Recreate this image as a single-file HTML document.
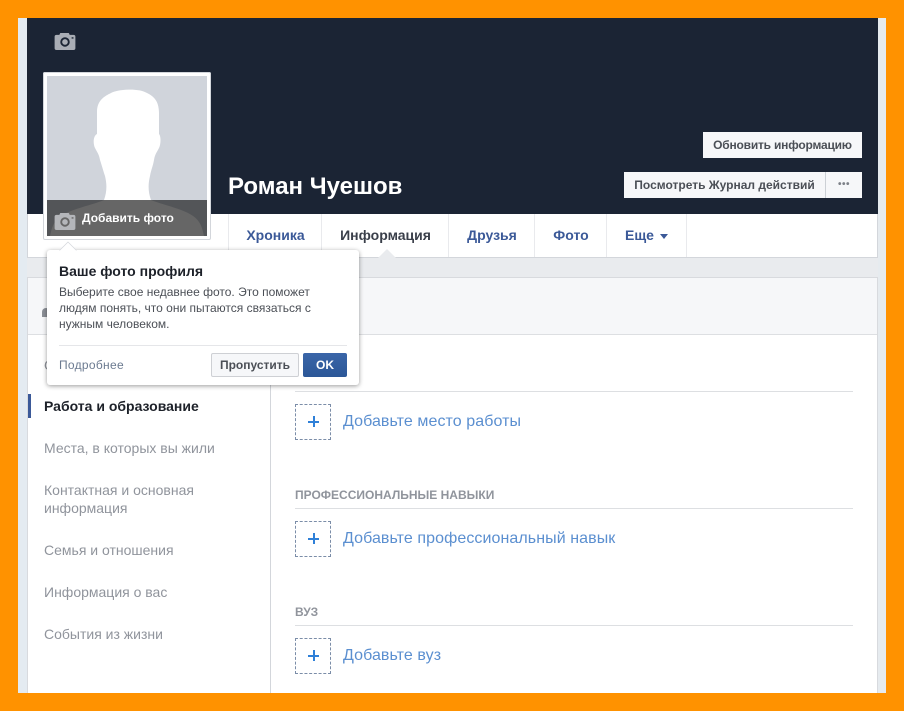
<!DOCTYPE html>
<html><head><meta charset="utf-8">
<style>
html,body{margin:0;padding:0;width:904px;height:711px;overflow:hidden;background:#ff9200;font-family:"Liberation Sans",sans-serif}
.a{position:absolute;white-space:nowrap}
#frame{position:absolute;left:18px;top:18px;width:868px;height:675px;background:#e9ebee;overflow:hidden}
.tab{position:absolute;top:214px;height:43px;line-height:43px;font-size:14px;font-weight:bold;color:#3b5998;text-align:center;border-right:1px solid #e9eaed;box-sizing:border-box;white-space:nowrap;padding-left:1px}
.side{position:absolute;left:44px;font-size:14px;line-height:18px;color:#90949c;white-space:nowrap}
.hd{position:absolute;left:295px;width:558px;font-size:12px;font-weight:bold;color:#90949c;height:20px;line-height:14px;border-bottom:1px solid #dddfe2;box-sizing:content-box}
.dash{position:absolute;left:295px;width:34px;height:34px;border:1px dashed #7b8da8}
.plus{position:absolute;left:12px;top:11px;width:11px;height:11px;background:linear-gradient(#2f80d8,#2f80d8) center/11px 2px no-repeat,linear-gradient(#2f80d8,#2f80d8) center/2px 11px no-repeat}
.add{position:absolute;left:343px;font-size:16px;color:#5b8fd0;line-height:20px;white-space:nowrap;letter-spacing:.08px}
.btn{position:absolute;background:#f6f7f9;font-size:12px;font-weight:bold;color:#4b4f56;text-align:center;box-sizing:border-box;white-space:nowrap}
</style></head>
<body>
<div id="frame"></div>
<!-- side strip tint -->
<div class="a" style="left:18px;top:18px;width:9px;height:675px;background:#e4ebf1"></div>
<div class="a" style="left:878px;top:18px;width:8px;height:675px;background:#e6ebef"></div>
<!-- cover -->
<div class="a" style="left:27px;top:18px;width:851px;height:196px;background:#1b2434"></div>
<!-- nav -->
<div class="a" style="left:27px;top:214px;width:851px;height:44px;background:#fff;border-bottom:1px solid #d3d6db;border-right:1px solid #d3d6db;border-left:1px solid #d3d6db;box-sizing:border-box"></div>
<div class="tab" style="left:228px;width:94px;border-left:1px solid #e9eaed">Хроника</div>
<div class="tab" style="left:322px;width:127px;color:#3a3f4a">Информация</div>
<div class="tab" style="left:449px;width:86px">Друзья</div>
<div class="tab" style="left:535px;width:72px">Фото</div>
<div class="tab" style="left:607px;width:80px;text-align:left;padding-left:18px">Еще<span style="position:absolute;left:53px;top:20px;width:0;height:0;border:4.5px solid transparent;border-top:5px solid #3b5998;border-bottom:0"></span></div>
<!-- nav arrow -->
<svg class="a" style="left:378px;top:249px" width="18" height="10"><path d="M0 9L9 0L18 9Z" fill="#e9ebee"/></svg>
<!-- card -->
<div class="a" style="left:27px;top:277px;width:851px;height:416px;background:#fff;border:1px solid #d8dade;border-bottom:0;box-sizing:border-box"></div>
<div class="a" style="left:28px;top:278px;width:849px;height:56px;background:#f6f7f9;border-bottom:1px solid #dddfe2;box-sizing:content-box"></div>
<div class="a" style="left:270px;top:335px;width:1px;height:358px;background:#d3d6db"></div>
<div class="a" style="left:42px;top:308px;width:8px;height:9px;background:#8b8f96;border-radius:4px 4px 0 0"></div>
<!-- sidebar -->
<div class="side" style="top:356px">Обзор</div>
<div class="a" style="left:28px;top:394px;width:3px;height:24px;background:#3b5998"></div>
<div class="side" style="top:397px;color:#1d2129;font-weight:bold">Работа и образование</div>
<div class="side" style="top:439px">Места, в которых вы жили</div>
<div class="side" style="top:481px">Контактная и основная<br>информация</div>
<div class="side" style="top:541px">Семья и отношения</div>
<div class="side" style="top:583px">Информация о вас</div>
<div class="side" style="top:625px">События из жизни</div>
<!-- content -->
<div class="a" style="left:295px;top:391px;width:558px;height:1px;background:#dddfe2"></div>
<div class="dash" style="top:404px"><div class="plus"></div></div>
<div class="add" style="top:412px">Добавьте место работы</div>
<div class="hd" style="top:488px">ПРОФЕССИОНАЛЬНЫЕ НАВЫКИ</div>
<div class="dash" style="top:521px"><div class="plus"></div></div>
<div class="add" style="top:529px">Добавьте профессиональный навык</div>
<div class="hd" style="top:605px">ВУЗ</div>
<div class="dash" style="top:638px"><div class="plus"></div></div>
<div class="add" style="top:646px">Добавьте вуз</div>
<!-- cover camera -->
<svg class="a" style="left:54px;top:33px" width="22" height="17" viewBox="0 0 22 18"><path fill-rule="evenodd" d="M2 2H5L6 0H15L16 2H20Q22 2 22 4V16Q22 18 20 18H2Q0 18 0 16V4Q0 2 2 2ZM11 4.500A5 5 0 1 0 11 14.500A5 5 0 1 0 11 4.500ZM11 6.500A3 3 0 1 1 11 12.500A3 3 0 1 1 11 6.500ZM18 4.500V6H20V4.500Z" fill="#a9adb5"/></svg>
<!-- name -->
<div class="a" style="left:228px;top:173px;font-size:24px;font-weight:bold;color:#fff;line-height:28px">Роман Чуешов</div>
<!-- cover buttons -->
<div class="btn" style="left:703px;top:132px;width:159px;height:26px;line-height:26px;letter-spacing:-.2px">Обновить информацию</div>
<div class="btn" style="left:624px;top:172px;width:202px;height:26px;line-height:26px;border-right:1px solid #ccd0d5">Посмотреть Журнал действий</div>
<div class="btn" style="left:826px;top:172px;width:36px;height:26px;line-height:26px;font-size:10px;letter-spacing:.5px;color:#7d8188">•••</div>
<!-- profile picture -->
<div class="a" style="left:43px;top:72px;width:168px;height:168px;background:#fff;border-radius:2px;box-shadow:inset 0 0 0 1px #d3d6db"></div>
<svg class="a" style="left:47px;top:76px" width="160" height="160" viewBox="0 0 160 160">
<rect width="160" height="160" fill="#d0d4db"/>
<path d="M50 36C50 24 58 20 64 17C72 13 92 12 100 17C108 21 112 26 112 38L112 58C114 60 114 68 112 72C110 76 108 78 107 84C106 90 104 94 103 100C101 108 101 116 104 124C118 130 145 134 152 146C155 150 156 156 157 160H3C4 156 5 150 8 146C15 134 44 130 57 124C60 116 60 108 58 100C56 94 55 90 53 84C52 78 50 76 48 72C46 68 46 60 50 58Z" fill="#fff"/>
<rect y="124" width="160" height="36" fill="#000" fill-opacity=".6"/>
</svg>
<svg class="a" style="left:54px;top:213px" width="22" height="17" viewBox="0 0 22 18"><path fill-rule="evenodd" d="M2 2H5L6 0H15L16 2H20Q22 2 22 4V16Q22 18 20 18H2Q0 18 0 16V4Q0 2 2 2ZM11 4.500A5 5 0 1 0 11 14.500A5 5 0 1 0 11 4.500ZM11 6.500A3 3 0 1 1 11 12.500A3 3 0 1 1 11 6.500ZM18 4.500V6H20V4.500Z" fill="#b4b6ba"/></svg>
<div class="a" style="left:82px;top:210px;font-size:12px;font-weight:bold;color:#fff;line-height:16px">Добавить фото</div>
<!-- popup -->
<div class="a" style="left:47px;top:250px;width:312px;height:135px;background:#fff;border-radius:3px;box-shadow:0 1px 5px rgba(0,0,0,.4)"></div>
<svg class="a" style="left:58px;top:241px" width="20" height="10"><path d="M1 10L10 1L19 10Z" fill="#fff" stroke="#d3d6db" stroke-width=".7"/><rect y="9.400" width="20" height="1" fill="#fff"/></svg>
<div class="a" style="left:59px;top:263px;font-size:14px;font-weight:bold;color:#1d2129;line-height:16px">Ваше фото профиля</div>
<div class="a" style="left:59px;top:284px;font-size:12px;color:#4b4f56;line-height:16px">Выберите свое недавнее фото. Это поможет<br>людям понять, что они пытаются связаться с<br>нужным человеком.</div>
<div class="a" style="left:59px;top:345px;width:288px;height:1px;background:#e5e6e9"></div>
<div class="a" style="left:59px;top:357px;font-size:12px;color:#6b7a90;line-height:16px;letter-spacing:.3px">Подробнее</div>
<div class="btn" style="left:211px;top:353px;width:88px;height:24px;line-height:22px;border:1px solid #ced0d4;border-radius:2px;color:#4b4f56">Пропустить</div>
<div class="btn" style="left:303px;top:353px;width:44px;height:24px;line-height:24px;background:linear-gradient(#3a65a8,#2b5797);border-radius:2px;color:#fff">OK</div>
</body></html>
